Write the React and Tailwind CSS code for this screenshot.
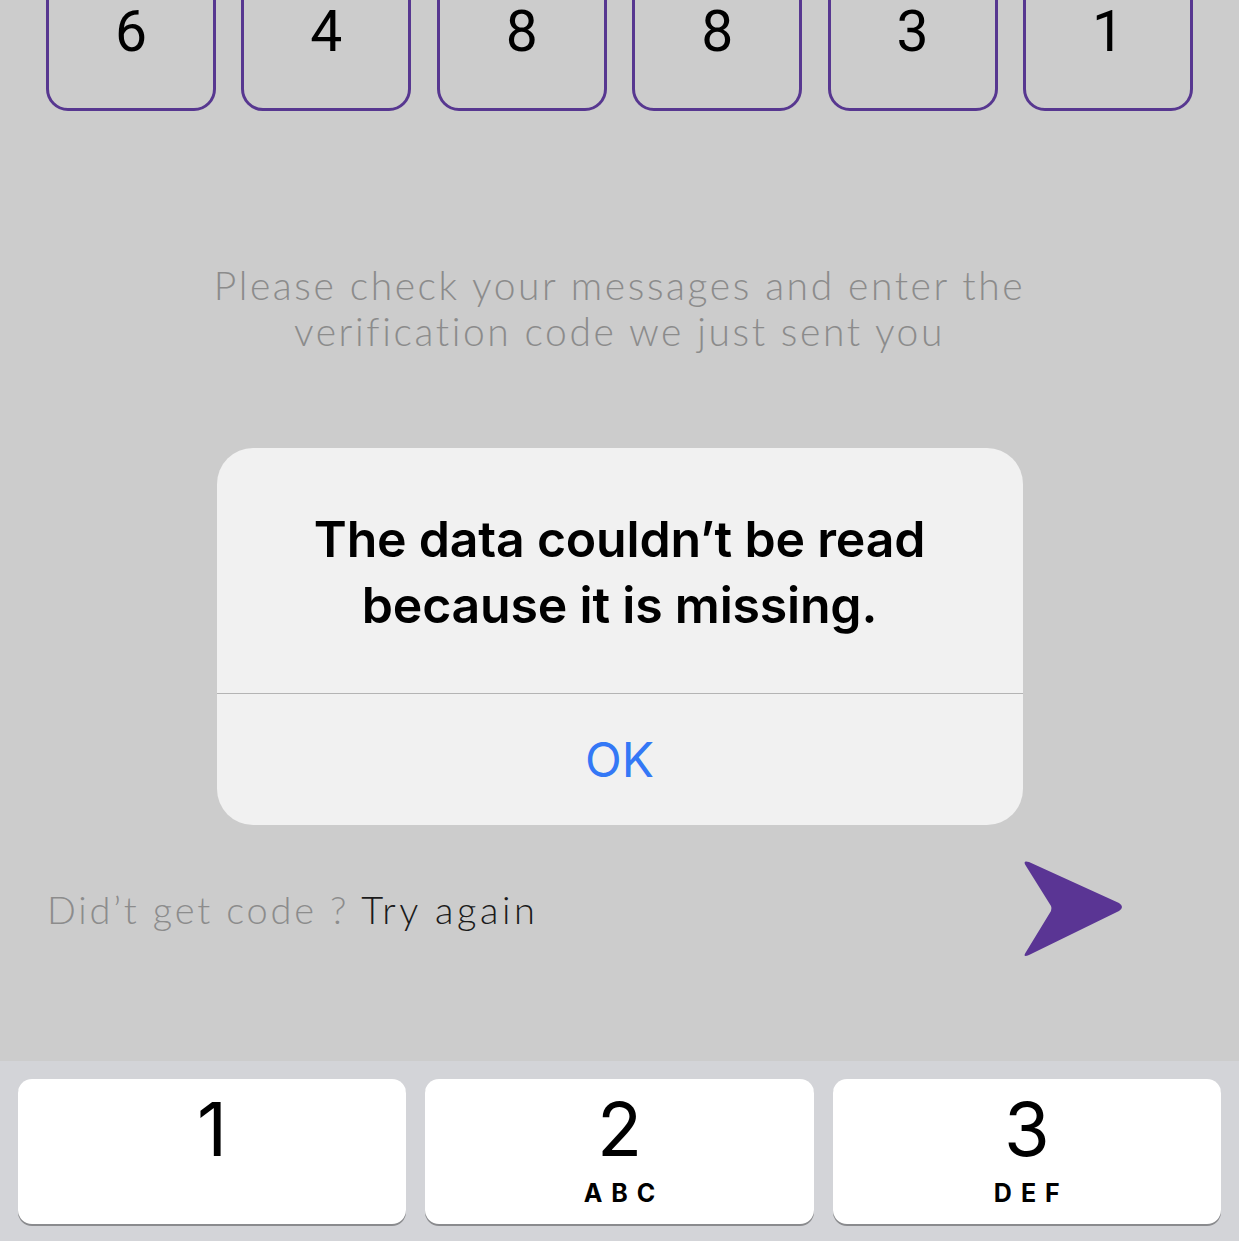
const CODE = ['6', '4', '8', '8', '3', '1']

const KEYS = [
  { digit: '1', letters: '' },
  { digit: '2', letters: 'ABC' },
  { digit: '3', letters: 'DEF' },
]

function SendArrow() {
  return (
    <svg width="104" height="100" viewBox="0 0 104 100" className="shrink-0">
      <path
        d="M5 7 Q1 1 8 3 L98 44 Q104 48 98 52 L8 96 Q1 99 5 93 L30 52 Q31 49 30 47 Z"
        fill="#5a3594"
      />
    </svg>
  )
}

export default function App() {
  return (
    <div className="w-full h-[1241px] bg-[#cccccc] flex flex-col overflow-hidden font-['Inter',sans-serif]">
      {/* verification code boxes, top cut off by the screen edge */}
      <div className="flex justify-between px-[46px] -mt-[40px]">
        {CODE.map((d, i) => (
          <div
            key={i}
            className="w-[170px] h-[151px] border-[3px] border-[#573790] rounded-[22px] flex justify-center pt-[40px]"
          >
            <span className="text-[57px] leading-none text-black font-['Roboto',sans-serif]">{d}</span>
          </div>
        ))}
      </div>

      <p className="mt-[151px] text-center text-[39px] leading-[46px] text-[#8b8b8b] font-light tracking-[2.6px] font-['Lato',sans-serif]">
        Please check your messages and enter the
        <br />
        verification code we just sent you
      </p>

      {/* alert */}
      <div className="mx-auto mt-[94px] w-[806px] h-[377px] rounded-[36px] bg-[#f1f1f1] flex flex-col">
        <div className="h-[245px] flex items-center justify-center pt-[2px]">
          <h2 className="text-center text-[50px] leading-[66px] font-semibold text-black tracking-[-0.2px]">
            The data couldn’t be read
            <br />
            because it is missing.
          </h2>
        </div>
        <div className="h-px bg-[#b4b4b4]" />
        <div className="flex-1 flex items-center justify-center">
          <span className="text-[48px] leading-none text-[#3478f6]">OK</span>
        </div>
      </div>

      <div className="mt-[34px] flex items-center justify-between pl-[47px] pr-[114px]">
        <p className="text-[38px] font-light tracking-[2.8px] font-['Lato',sans-serif]">
          <span className="text-[#8c8c8c]">Did’t get code ?</span>
          <span className="text-[#1b1b1b] ml-[12px] tracking-[3.6px]">Try again</span>
        </p>
        <SendArrow />
      </div>

      {/* numeric keyboard */}
      <div className="mt-auto bg-[#d3d4d8] h-[180px] flex gap-[19px] px-[18px] pt-[18px]">
        {KEYS.map((k) => (
          <div
            key={k.digit}
            className="flex-1 h-[145px] bg-white rounded-[14px] shadow-[0_2px_0_#8a8b8e] flex flex-col items-center"
          >
            <span className="mt-[8px] text-[74px] leading-[84px] font-normal text-black">{k.digit}</span>
            <span className="mt-[10px] text-[25px] leading-none font-bold tracking-[9px] pl-[9px] text-black">{k.letters}</span>
          </div>
        ))}
      </div>
    </div>
  )
}
